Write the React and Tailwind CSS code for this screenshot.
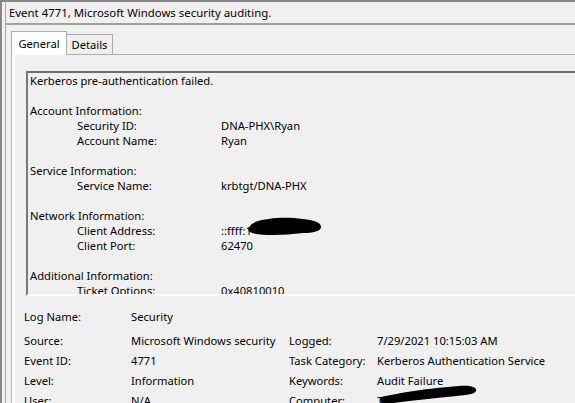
export default function App() {
  const Line = ({ label, value, children }) => (
    <div className="flex h-[15px] items-center">
      <div className="w-[47px] shrink-0" />
      <div className="w-[144px] shrink-0 whitespace-nowrap">{label}</div>
      <div className="relative whitespace-nowrap">{value}{children}</div>
    </div>
  );
  const Head = ({ children }) => (
    <div className="flex h-[15px] items-center whitespace-nowrap">{children}</div>
  );
  const Blank = () => <div className="h-[15px]" />;

  return (
    <div className="w-[575px] h-[403px] overflow-hidden bg-[#f0f0f0] text-[11.2px] leading-[15px] text-black font-['Noto_Sans','DejaVu_Sans',sans-serif]">
      <div className="w-[700px] h-[420px] border-t-2 border-l-2 border-[#858585] flex">
        <div className="w-[3px] shrink-0" />
        <div className="flex-1 border-l border-[#a8a8a8] flex flex-col">
          {/* title */}
          <div className="h-[23px] flex items-center pl-[3px] border-b-2 border-[#a0a0a0] shrink-0">
            <span className="whitespace-nowrap text-[11.4px]">Event 4771, Microsoft Windows security auditing.</span>
          </div>
          {/* tabs */}
          <div className="flex-1 flex flex-col pl-[5px] pt-[6px]">
            <div className="flex items-end h-[23px] shrink-0">
              <div className="relative z-10 h-[24px] w-[56px] -mb-px border border-b-0 border-[#adadad] bg-white flex items-center justify-center">
                General
              </div>
              <div className="h-[20px] w-[46px] border border-l-0 border-b-0 border-[#adadad] bg-[#f0f0f0] flex items-center justify-center">
                Details
              </div>
            </div>
            <div className="flex-1 border-t border-l border-[#adadad] flex">
              <div className="w-[3px] bg-white shrink-0" />
              <div className="flex-1 flex flex-col pt-[16px] pl-[11px]">
                {/* text box */}
                <div className="h-[225px] w-[700px] shrink-0 border-t-2 border-l-2 border-t-[#6d6d6d] border-l-[#7a7a7a] border-b-2 border-b-white overflow-hidden">
                  <div className="pl-[2px]">
                    <Head>Kerberos pre-authentication failed.</Head>
                    <Blank />
                    <Head>Account Information:</Head>
                    <Line label="Security ID:" value="DNA-PHX\Ryan" />
                    <Line label="Account Name:" value="Ryan" />
                    <Blank />
                    <Head>Service Information:</Head>
                    <Line label="Service Name:" value="krbtgt/DNA-PHX" />
                    <Blank />
                    <Head>Network Information:</Head>
                    <Line label="Client Address:" value="::ffff:1">
                      <svg className="absolute left-[26px] top-[-7px]" width="76" height="22" viewBox="0 0 76 22">
                        <path d="M2 12 C4 6 12 4 22 3 C34 1 46 2 56 3 C66 4 74 6 74 11 C74 15 66 17 56 17 C46 18 36 19 26 19 C16 19 6 18 3 16 C1 15 1 13 2 12 Z" fill="#000" />
                      </svg>
                    </Line>
                    <Line label="Client Port:" value="62470" />
                    <Blank />
                    <Head>Additional Information:</Head>
                    <Line label="Ticket Options:" value="0x40810010" />
                    <Line label="Failure Code:" value="0x18" />
                  </div>
                </div>
                {/* summary */}
                <div className="pt-[10px] ml-[-2px] flex flex-col">
                  <div className="flex h-[20px] items-center mb-[4px] whitespace-nowrap">
                    <div className="w-[107px] shrink-0">Log Name:</div>
                    <div>Security</div>
                  </div>
                  <div className="flex h-[20px] items-center whitespace-nowrap">
                    <div className="w-[107px] shrink-0">Source:</div>
                    <div className="w-[158px] shrink-0">Microsoft Windows security</div>
                    <div className="w-[88px] shrink-0">Logged:</div>
                    <div>7/29/2021 10:15:03 AM</div>
                  </div>
                  <div className="flex h-[20px] items-center whitespace-nowrap">
                    <div className="w-[107px] shrink-0">Event ID:</div>
                    <div className="w-[158px] shrink-0">4771</div>
                    <div className="w-[88px] shrink-0">Task Category:</div>
                    <div>Kerberos Authentication Service</div>
                  </div>
                  <div className="flex h-[20px] items-center whitespace-nowrap">
                    <div className="w-[107px] shrink-0">Level:</div>
                    <div className="w-[158px] shrink-0">Information</div>
                    <div className="w-[88px] shrink-0">Keywords:</div>
                    <div>Audit Failure</div>
                  </div>
                  <div className="flex h-[20px] items-center whitespace-nowrap">
                    <div className="w-[107px] shrink-0">User:</div>
                    <div className="w-[158px] shrink-0">N/A</div>
                    <div className="w-[88px] shrink-0">Computer:</div>
                    <div className="relative">
                      T
                      <svg className="absolute left-[2px] top-[-8px]" width="100" height="20" viewBox="0 0 100 20">
                        <path d="M2 12 C20 8 50 3 80 1 C92 0 98 2 97 6 C96 9 88 10 78 11 C55 13 30 16 6 19 C1 19 0 14 2 12 Z" fill="#000" />
                      </svg>
                    </div>
                  </div>
                </div>
              </div>
            </div>
          </div>
        </div>
      </div>
    </div>
  );
}
